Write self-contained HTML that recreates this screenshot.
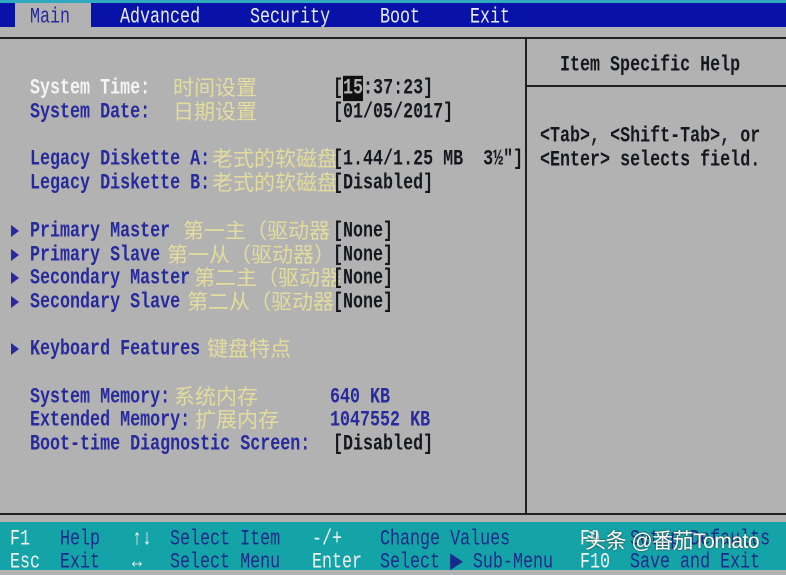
<!DOCTYPE html>
<html><head><meta charset="utf-8"><style>
html,body{margin:0;padding:0}
body{width:786px;height:570px;position:relative;overflow:hidden;background:#b2b2b2;font-family:"Liberation Mono",monospace}
.t{position:absolute;white-space:pre;font-size:20px;line-height:20px;transform-origin:left center;transform:scaleX(0.834) scaleY(1.1);font-weight:bold;margin-top:3px}
.b{color:#262a9c}
.w{color:#f4f4f4}
.k{color:#16161e}
.c{position:absolute;white-space:pre;font-family:"Liberation Sans","Noto Sans CJK SC",sans-serif;font-size:21px;line-height:20px;color:rgba(240,230,150,0.8);margin-top:3px}
.n{color:#e8eef8;font-weight:normal}
.f{color:#f2f2f2;font-weight:normal}
.fl{color:#1a2a8a;font-weight:normal}
.ar{position:absolute;width:0;height:0;border-top:6px solid transparent;border-bottom:6px solid transparent;border-left:8px solid #262a9c;margin-top:2px}
</style></head><body>
<div style="position:absolute;left:0;top:0;width:786px;height:3px;background:#30a8c0"></div>
<div style="position:absolute;left:0;top:3px;width:786px;height:24px;background:#0812a8"></div>
<div style="position:absolute;left:15px;top:3px;width:76px;height:24px;background:#b2b2b2"></div>
<div class="t b" style="left:30px;top:5px;font-weight:normal">Main</div>
<div class="t n" style="left:120px;top:5px">Advanced</div>
<div class="t n" style="left:250px;top:5px">Security</div>
<div class="t n" style="left:380px;top:5px">Boot</div>
<div class="t n" style="left:470px;top:5px">Exit</div>

<div style="position:absolute;left:-2px;top:37px;width:527px;height:474px;border:2px solid #202020;border-left:none"></div>
<div style="position:absolute;left:525px;top:37px;width:270px;height:474px;border:2px solid #202020"></div>
<div style="position:absolute;left:527px;top:85px;width:260px;height:2px;background:#202020"></div>
<div class="t k" style="left:560px;top:53px">Item Specific Help</div>
<div class="t k" style="left:540px;top:124px">&lt;Tab&gt;, &lt;Shift-Tab&gt;, or</div>
<div class="t k" style="left:540px;top:148px">&lt;Enter&gt; selects field.</div>

<div class="t w" style="left:30px;top:76px">System Time:</div><div class="c" style="left:173px;top:76px">时间设置</div>
<div class="t k" style="left:333px;top:76px">[<span style="background:#101010;color:#b2b2b2">15</span>:37:23]</div>
<div class="t b" style="left:30px;top:100px">System Date:</div><div class="c" style="left:173px;top:100px">日期设置</div>
<div class="t k" style="left:333px;top:100px">[01/05/2017]</div>

<div class="t b" style="left:30px;top:147px">Legacy Diskette A:</div><div class="c" style="left:212px;top:147px">老式的软磁盘</div>
<div class="t k" style="left:333px;top:147px">[1.44/1.25 MB  3½"]</div>
<div class="t b" style="left:30px;top:171px">Legacy Diskette B:</div><div class="c" style="left:212px;top:171px">老式的软磁盘</div>
<div class="t k" style="left:333px;top:171px">[Disabled]</div>

<div class="ar" style="left:11px;top:223px"></div><div class="t b" style="left:30px;top:219px">Primary Master</div><div class="c" style="left:183px;top:219px">第一主（驱动器</div><div class="t k" style="left:333px;top:219px">[None]</div>
<div class="ar" style="left:11px;top:247px"></div><div class="t b" style="left:30px;top:243px">Primary Slave</div><div class="c" style="left:167px;top:243px">第一从（驱动器）</div><div class="t k" style="left:333px;top:243px">[None]</div>
<div class="ar" style="left:11px;top:270px"></div><div class="t b" style="left:30px;top:266px">Secondary Master</div><div class="c" style="left:194px;top:266px">第二主（驱动器</div><div class="t k" style="left:333px;top:266px">[None]</div>
<div class="ar" style="left:11px;top:294px"></div><div class="t b" style="left:30px;top:290px">Secondary Slave</div><div class="c" style="left:187px;top:290px">第二从（驱动器</div><div class="t k" style="left:333px;top:290px">[None]</div>

<div class="ar" style="left:11px;top:341px"></div><div class="t b" style="left:30px;top:337px">Keyboard Features</div><div class="c" style="left:207px;top:337px">键盘特点</div>

<div class="t b" style="left:30px;top:385px">System Memory:</div><div class="c" style="left:174px;top:385px">系统内存</div><div class="t b" style="left:330px;top:385px">640 KB</div>
<div class="t b" style="left:30px;top:408px">Extended Memory:</div><div class="c" style="left:195px;top:408px">扩展内存</div><div class="t b" style="left:330px;top:408px">1047552 KB</div>
<div class="t b" style="left:30px;top:432px">Boot-time Diagnostic Screen:</div><div class="t k" style="left:333px;top:432px">[Disabled]</div>

<div style="position:absolute;left:0;top:522px;width:786px;height:48px;background:#14a4a8"></div>
<div class="t f" style="left:10px;top:527px">F1</div><div class="t fl" style="left:60px;top:527px">Help</div>
<div class="t f" style="left:132px;top:527px">↑↓</div><div class="t fl" style="left:170px;top:527px">Select Item</div>
<div class="t f" style="left:312px;top:527px">-/+</div><div class="t fl" style="left:380px;top:527px">Change Values</div>
<div class="t f" style="left:580px;top:527px">F9</div><div class="t fl" style="left:630px;top:527px">Setup Defaults</div>
<div class="t f" style="left:10px;top:550px">Esc</div><div class="t fl" style="left:60px;top:550px">Exit</div>
<div class="t f" style="left:132px;top:550px">↔</div><div class="t fl" style="left:170px;top:550px">Select Menu</div>
<div class="t f" style="left:312px;top:550px">Enter</div><div class="t fl" style="left:380px;top:550px">Select ▶ Sub-Menu</div>
<div class="t f" style="left:580px;top:550px">F10</div><div class="t fl" style="left:630px;top:550px">Save and Exit</div>
<div style="position:absolute;left:585px;top:531px;font-family:'Liberation Sans','Noto Sans CJK SC',sans-serif;font-size:21px;line-height:22px;color:#fff;white-space:pre;text-shadow:0 0 2px #333;letter-spacing:-0.5px">头条 @番茄Tomato</div>
</body></html>
